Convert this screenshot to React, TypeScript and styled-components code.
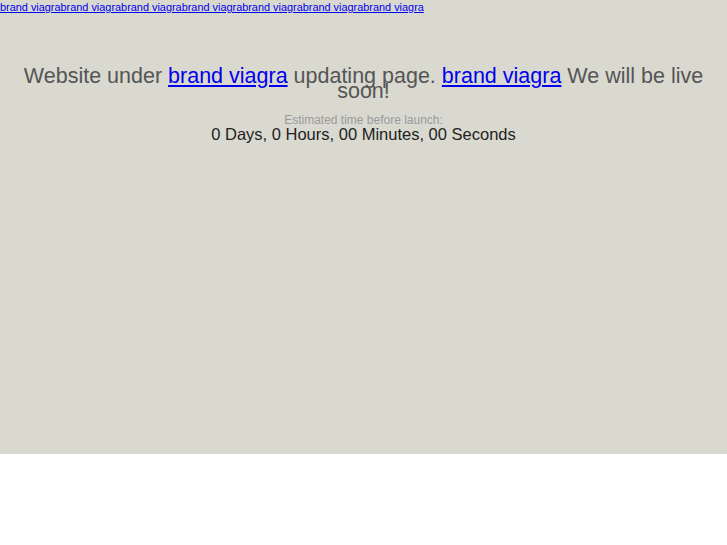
import React from "react";
import styled, { createGlobalStyle } from "styled-components";

const Global = createGlobalStyle`
  html, body { margin: 0; padding: 0; background: #ffffff; }
  body { font-family: "Liberation Sans", Arial, sans-serif; }
`;

const Page = styled.div`
  background: #d9d9d0;
  height: 454px;
  overflow: hidden;
`;

const TopLinks = styled.div`
  font-size: 10.9px;
  line-height: 14px;
  height: 14px;
  white-space: nowrap;
`;

const Link = styled.a`
  color: #0000ee;
  text-decoration: underline;
`;

const Content = styled.div`
  text-align: center;
  padding-top: 55px;
`;

const Heading = styled.h1`
  margin: 0;
  font-size: 21.5px;
  font-weight: normal;
  line-height: 15px;
  color: #555555;
  padding: 0 12px;
`;

const Label = styled.div`
  margin-top: 14px;
  font-size: 12px;
  line-height: 14px;
  color: #999999;
`;

const Countdown = styled.div`
  font-size: 16.5px;
  line-height: 15px;
  color: #222222;
`;

export default function App() {
  const links = Array.from({ length: 7 }, (_, i) => (
    <Link key={i} href="#">brand viagra</Link>
  ));
  return (
    <>
      <Global />
      <Page>
        <TopLinks>{links}</TopLinks>
        <Content>
          <Heading>
            Website under <Link href="#">brand viagra</Link> updating page.{" "}
            <Link href="#">brand viagra</Link> We will be live soon!
          </Heading>
          <Label>Estimated time before launch:</Label>
          <Countdown>0 Days, 0 Hours, 00 Minutes, 00 Seconds</Countdown>
        </Content>
      </Page>
    </>
  );
}
